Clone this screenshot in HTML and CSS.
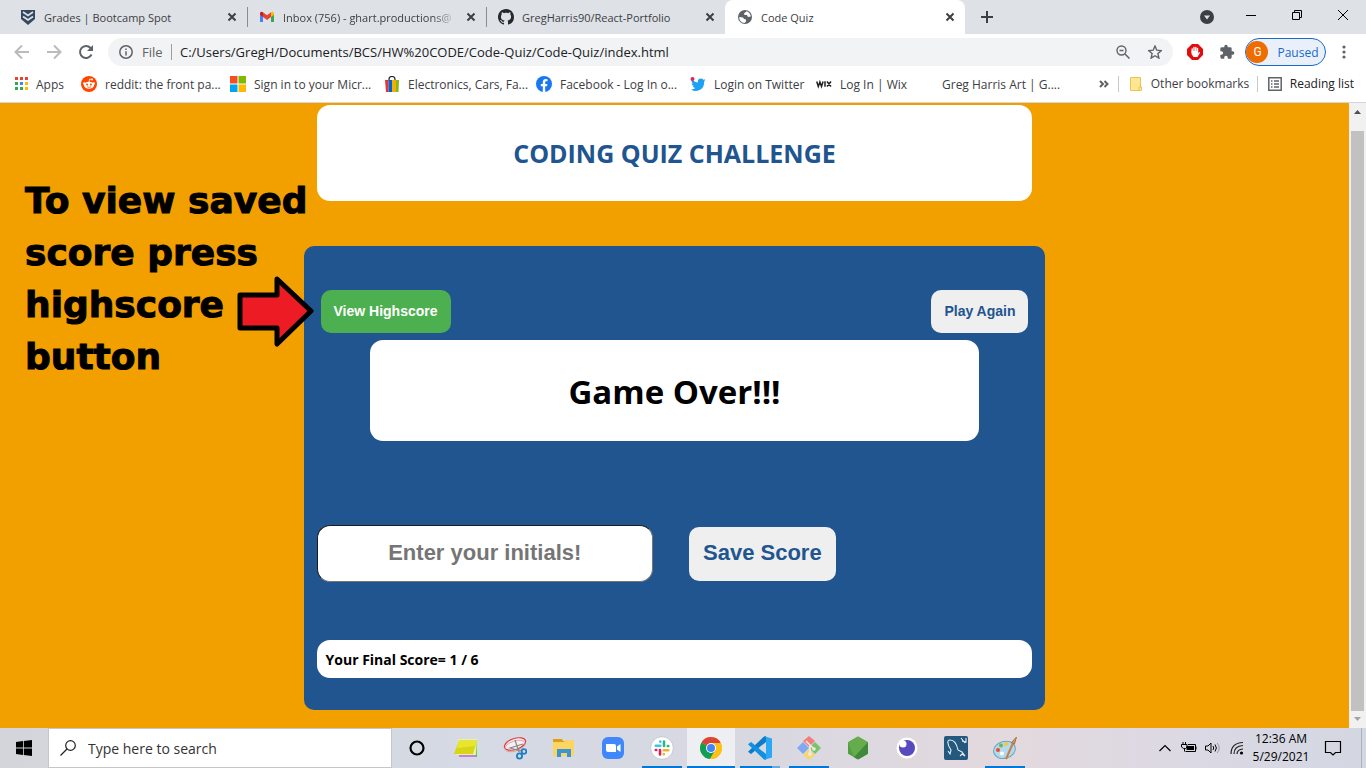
FILE: index.html
```html
<!DOCTYPE html>
<html lang="en">
<head>
<meta charset="utf-8">
<title>Code Quiz</title>
<link rel="stylesheet" href="styles.css">
</head>
<body>
<div class="desktop">
  <header class="browser">
    <div class="tabstrip">
      <div class="tab">
        <svg class="i16" viewBox="0 0 16 16"><path d="M1 1h14v9l-7 6-7-6z" fill="#34495e"/><path d="M3 3l5 3.500 5-3.500M3 7.500l5 3.500 5-3.500" fill="none" stroke="#dee1e6" stroke-width="1.800"/></svg>
        <span class="tab-title">Grades | Bootcamp Spot</span>
        <button class="tab-close" aria-label="Close tab"><svg class="i10" viewBox="0 0 10 10"><path d="M1.500 1.500l7 7M8.500 1.500l-7 7"/></svg></button>
      </div>
      <div class="tab split">
        <svg class="i16" viewBox="0 0 16 16"><path d="M1 4v9h3V6.500z" fill="#4285f4"/><path d="M15 4v9h-3V6.500z" fill="#34a853"/><path d="M1 4.500C1 2.500 3 2.500 4 3.300V8L1 5.800z" fill="#c5221f"/><path d="M15 4.500c0-2-2-2-3-1.200V8l3-2.200z" fill="#fbbc04"/><path d="M4 3.300l4 3 4-3V8l-4 3-4-3z" fill="#ea4335"/></svg>
        <span class="tab-title fade">Inbox (756) - ghart.productions@</span>
        <button class="tab-close" aria-label="Close tab"><svg class="i10" viewBox="0 0 10 10"><path d="M1.500 1.500l7 7M8.500 1.500l-7 7"/></svg></button>
      </div>
      <div class="tab split">
        <svg class="i16" viewBox="0 0 16 16"><path fill="#24292e" d="M8 0C3.580 0 0 3.580 0 8c0 3.540 2.290 6.530 5.470 7.590.4.070.55-.17.55-.38 0-.19-.01-.82-.01-1.490-2.010.37-2.530-.49-2.690-.94-.09-.23-.48-.94-.82-1.130-.28-.15-.68-.52-.01-.53.63-.01 1.080.58 1.230.82.72 1.210 1.870.87 2.330.66.07-.52.28-.87.51-1.070-1.780-.2-3.640-.89-3.640-3.950 0-.87.31-1.590.82-2.150-.08-.2-.36-1.020.08-2.120 0 0 .67-.21 2.200.82.64-.18 1.320-.27 2-.27s1.360.09 2 .27c1.530-1.040 2.200-.82 2.200-.82.44 1.100.16 1.920.08 2.120.51.56.82 1.270.82 2.150 0 3.070-1.870 3.750-3.650 3.950.29.25.54.73.54 1.480 0 1.070-.01 1.930-.01 2.200 0 .21.15.46.55.38A8.010 8.010 0 0 0 16 8c0-4.420-3.580-8-8-8z"/></svg>
        <span class="tab-title">GregHarris90/React-Portfolio</span>
        <button class="tab-close" aria-label="Close tab"><svg class="i10" viewBox="0 0 10 10"><path d="M1.500 1.500l7 7M8.500 1.500l-7 7"/></svg></button>
      </div>
      <div class="tab active">
        <svg class="i16" viewBox="0 0 16 16"><circle cx="8" cy="8" r="7" fill="#5f6368"/><path d="M9.500 2.200C12 2.800 13.500 5 13.800 7.500L11 8 10 6H7.500L7 4.500z" fill="#fff"/><path d="M2.200 8L6 8.500l1 1.500 2 .5v2L7.500 14C4.500 13.800 2.200 11.500 2.200 8z" fill="#fff"/></svg>
        <span class="tab-title">Code Quiz</span>
        <button class="tab-close" aria-label="Close tab"><svg class="i10" viewBox="0 0 10 10"><path d="M1.500 1.500l7 7M8.500 1.500l-7 7"/></svg></button>
      </div>
      <button class="new-tab" aria-label="New tab"><svg class="i12" viewBox="0 0 12 12"><path d="M6 0v12M0 6h12"/></svg></button>
      <button class="tab-search" aria-label="Search tabs"><svg class="i14" viewBox="0 0 14 14"><circle cx="7" cy="7" r="7" fill="#3c4043"/><path d="M4 5.500h6L7 9.500z" fill="#dee1e6"/></svg></button>
      <div class="window-controls">
        <button aria-label="Minimize"><svg class="i10" viewBox="0 0 10 10"><path d="M0 5.500h10"/></svg></button>
        <button aria-label="Restore"><svg class="i10" viewBox="0 0 10 10"><path d="M.5 2.500h7v7h-7zM2.500 2.500v-2h7v7h-2"/></svg></button>
        <button aria-label="Close"><svg class="i10" viewBox="0 0 10 10"><path d="M0 0l10 10M10 0L0 10"/></svg></button>
      </div>
    </div>

    <div class="toolbar">
      <nav class="nav-buttons">
        <button aria-label="Back"><svg class="i16 dim" viewBox="0 0 16 16"><path d="M15 8H2M8 1.500L1.500 8 8 14.500"/></svg></button>
        <button aria-label="Forward"><svg class="i16 dim" viewBox="0 0 16 16"><path d="M1 8h13M8 1.500L14.500 8 8 14.500"/></svg></button>
        <button aria-label="Reload"><svg class="i16 dark" viewBox="0 0 16 16"><path d="M13.500 10.500A6 6 0 1 1 12.500 4L14 5.500"/><path d="M15 1v6H9z" fill="#5f6368" stroke="none"/></svg></button>
      </nav>
      <div class="omnibox">
        <svg class="i14" viewBox="0 0 14 14"><circle cx="7" cy="7" r="6.200" fill="none" stroke="#5f6368" stroke-width="1.500"/><path d="M7 6.200v4.200M7 3.400v1.500" stroke="#5f6368" stroke-width="1.500"/></svg>
        <span class="scheme">File</span>
        <input class="url" type="text" aria-label="Address" value="C:/Users/GregH/Documents/BCS/HW%20CODE/Code-Quiz/Code-Quiz/index.html">
        <button aria-label="Zoom"><svg class="i14" viewBox="0 0 14 14"><circle cx="5.500" cy="5.500" r="4.500" fill="none" stroke="#5f6368" stroke-width="1.400"/><path d="M9 9l4.500 4.500M3.500 5.500h4" stroke="#5f6368" stroke-width="1.500"/></svg></button>
        <button aria-label="Bookmark this page"><svg class="i14" viewBox="0 0 14 14"><path d="M7 1l1.800 4.200 4.500.4-3.400 3 1 4.500L7 10.700l-3.900 2.400 1-4.500-3.400-3 4.500-.4z" fill="none" stroke="#5f6368" stroke-width="1.400"/></svg></button>
      </div>
      <div class="extensions">
        <button aria-label="Ad blocker"><svg class="i16" viewBox="0 0 16 16"><path d="M5 0h6l5 5v6l-5 5H5l-5-5V5z" fill="#e40d0d"/><path d="M5.200 8V5M7 7V3.500M8.800 7V3.500M10.500 7V4.500" stroke="#fff" stroke-width="1.400" stroke-linecap="round"/><path d="M4.500 7h6.700v2l1.300-1c.6 0 .6.500.3 1L10.500 13H6.500l-2-3z" fill="#fff"/></svg></button>
        <button aria-label="Extensions"><svg class="i16" viewBox="0 0 24 24"><path fill="#5f6368" d="M20.500 11H19V7a2 2 0 0 0-2-2h-4V3.500a2.500 2.500 0 0 0-5 0V5H4a2 2 0 0 0-2 2v3.800h1.500a2.700 2.700 0 0 1 0 5.400H2V20a2 2 0 0 0 2 2h3.800v-1.500a2.700 2.700 0 0 1 5.400 0V22H17a2 2 0 0 0 2-2v-4h1.500a2.500 2.500 0 0 0 0-5z"/></svg></button>
      </div>
      <button class="profile"><span class="avatar">G</span>Paused</button>
      <button class="menu" aria-label="Menu"><svg class="i14" viewBox="0 0 14 14" fill="#5f6368"><circle cx="7" cy="2" r="1.600"/><circle cx="7" cy="7" r="1.600"/><circle cx="7" cy="12" r="1.600"/></svg></button>
    </div>

    <nav class="bookmarks">
      <div class="bookmark-list">
        <a href="#"><svg class="i14" viewBox="0 0 14 14"><path fill="#ea4335" d="M1 0h3v3H1zM6 0h3v3H6zM11 0h3v3h-3z"/><path fill="#34a853" d="M1 5h3v3H1zM1 10h3v3H1zM6 10h3v3H6z"/><path fill="#4285f4" d="M6 5h3v3H6z"/><path fill="#fbbc04" d="M11 5h3v3h-3zM11 10h3v3h-3z"/></svg>Apps</a>
        <a href="#"><svg class="i16" viewBox="0 0 16 16"><circle cx="8" cy="8" r="8" fill="#ff4500"/><ellipse cx="8" cy="9.200" rx="5" ry="3.500" fill="#fff"/><circle cx="3.300" cy="7.500" r="1.300" fill="#fff"/><circle cx="12.700" cy="7.500" r="1.300" fill="#fff"/><circle cx="11" cy="3.500" r="1" fill="#fff"/><path d="M8 6l.7-3 2.300.5" fill="none" stroke="#fff" stroke-width=".8"/><circle cx="6.100" cy="8.500" r="1" fill="#ff4500"/><circle cx="9.900" cy="8.500" r="1" fill="#ff4500"/><path d="M6 10.800q2 1.200 4 0" fill="none" stroke="#ff4500" stroke-width=".7"/></svg>reddit: the front pa...</a>
        <a href="#"><svg class="i16" viewBox="0 0 16 16"><path fill="#f25022" d="M0 0h7.500v7.500H0z"/><path fill="#7fba00" d="M8.500 0H16v7.500H8.500z"/><path fill="#00a4ef" d="M0 8.500h7.500V16H0z"/><path fill="#ffb900" d="M8.500 8.500H16V16H8.500z"/></svg>Sign in to your Micr...</a>
        <a href="#"><svg class="i16" viewBox="0 0 16 16"><path d="M5 5V3q0-2.500 3-2.500T11 3v2" fill="none" stroke="#222" stroke-width="1.200"/><path fill="#e53238" d="M1 4h3.500v12H2z"/><path fill="#0064d2" d="M4.500 4H8v12H4.500z"/><path fill="#f5af02" d="M8 4h4v12H8z"/><path fill="#86b817" d="M12 4h3l-.5 12H12z"/></svg>Electronics, Cars, Fa...</a>
        <a href="#"><svg class="i16" viewBox="0 0 16 16"><circle cx="8" cy="8" r="8" fill="#1877f2"/><path fill="#fff" d="M6.800 16v-5.700h-2V8h2V6.200c0-2 1.200-3.100 3-3.100l1.700.1v2h-1c-1 0-1.300.6-1.300 1.200V8h2.200l-.4 2.300H9.200V16z"/></svg>Facebook - Log In o...</a>
        <a href="#"><svg class="i16" viewBox="0 0 16 16"><path fill="#1da1f2" d="M15.500 4.200c-.5.300-1 .4-1.600.5.500-.4 1-.9 1.200-1.600-.6.300-1.200.6-1.800.7A3 3 0 0 0 8 6.500 8 8 0 0 1 2.200 3.500 3 3 0 0 0 3 7.600c-.5 0-.9-.2-1.300-.4A3 3 0 0 0 4 10.100c-.4.100-.9.100-1.300 0a3 3 0 0 0 2.700 2A6 6 0 0 1 1 13.500 8.300 8.300 0 0 0 14 6z"/><circle cx="2.500" cy="3" r="2" fill="#e0245e"/></svg>Login on Twitter</a>
        <a href="#"><svg class="i16" viewBox="0 0 16 16"><path d="M.7 5.500l1.600 5 1.600-4.500 1.600 4.500 1.600-5M9 5.300v5.400M11 5.500l4 5M15 5.500l-4 5" fill="none" stroke="#222" stroke-width="1.500"/></svg>Log In | Wix</a>
        <a href="#"><svg class="i16" viewBox="0 0 16 16"></svg>Greg Harris Art | G....</a>
      </div>
      <button class="overflow" aria-label="More bookmarks"><svg class="i10" viewBox="0 0 10 10"><path d="M1 2l3 3-3 3M5.500 2l3 3-3 3"/></svg></button>
      <a class="other" href="#"><svg class="i14" viewBox="0 0 14 14"><path d="M1.500.5h10v13h-10z" fill="#ffe694" stroke="#e8c451"/><path d="M10 10h2.500v3.500H10z" fill="#ffe694" stroke="#e8c451"/></svg>Other bookmarks</a>
      <a class="reading" href="#"><svg class="i14" viewBox="0 0 14 14"><path d="M.8.800h12.400v12.400H.8z" fill="none" stroke="#5f6368" stroke-width="1.500"/><path d="M3 4h1.500M3 7h1.500M3 10h1.500M6 4h5M6 7h5M6 10h5" stroke="#5f6368" stroke-width="1.500"/></svg>Reading list</a>
    </nav>
  </header>

  <div class="viewport">
    <main class="page">
      <h1 class="title">CODING QUIZ CHALLENGE</h1>
      <section class="panel">
        <div class="actions">
          <button class="btn primary">View Highscore</button>
          <button class="btn">Play Again</button>
        </div>
        <h2 class="result">Game Over!!!</h2>
        <form class="save">
          <input class="initials" type="text" placeholder="Enter your initials!" aria-label="Enter your initials">
          <button class="save-btn" type="button">Save Score</button>
        </form>
        <p class="score">Your Final Score= 1 / 6</p>
      </section>
      <p class="note">To view saved<br>score press<br>highscore<br>button</p>
      <svg class="arrow" viewBox="0 0 78 74"><path d="M3 21h37V5l34 32-34 33V54H3z" fill="#ed1c24" stroke="#000" stroke-width="5" stroke-linejoin="round"/></svg>
    </main>
    <div class="scrollbar">
      <svg class="sb-arrow" viewBox="0 0 17 17"><path d="M5 11h7L8.500 7z" fill="#505050"/></svg>
      <div class="thumb"></div>
      <svg class="sb-arrow" viewBox="0 0 17 17"><path d="M5 6h7l-3.500 4z" fill="#a3a3a3"/></svg>
    </div>
  </div>

  <footer class="taskbar">
    <button class="start" aria-label="Start"><svg class="i16" viewBox="0 0 16 16"><path d="M0 2l7-1v6.500H0zM7.800.9L16 0v7.500H7.800zM0 8.400h7V15l-7-1zM7.800 8.400H16V16l-8.200-1z"/></svg></button>
    <label class="search"><svg class="i16" viewBox="0 0 16 16"><circle cx="10.500" cy="5.500" r="4.800" fill="none" stroke="#222" stroke-width="1.200"/><path d="M7 9L.5 15.500" stroke="#222" stroke-width="1.200"/></svg><input type="text" placeholder="Type here to search" aria-label="Search"></label>
    <nav class="apps">
      <button aria-label="Cortana"><svg viewBox="0 0 24 24"><circle cx="12" cy="12" r="6.500" fill="none" stroke="#000" stroke-width="2.200"/></svg></button>
      <button aria-label="Sticky Notes"><svg viewBox="0 0 24 24"><path d="M5 4h18v17H5z" fill="#46d32c"/><path d="M5 18h17v3H5z" fill="#c77de0"/><path d="M4 3h19l-1 16H2z" fill="#e9f2a4"/><path d="M5 4.500h18L19 18H0z" fill="#d6d616"/><path d="M5 4.500h18L21 10 3 12z" fill="#e7e52e"/></svg></button>
      <button aria-label="Snipping Tool"><svg viewBox="0 0 24 24"><g fill="none"><ellipse cx="12" cy="8" rx="11" ry="5.500" transform="rotate(-18 12 8)" fill="#f4f0f2" stroke="#e0393b" stroke-width="1.200"/><ellipse cx="12" cy="10" rx="10.500" ry="5" transform="rotate(-18 12 10)" stroke="#d99" stroke-width=".8"/><path d="M12 4l4 12M20 8L7 12l11 3" stroke="#888" stroke-width="1.200"/><circle cx="21" cy="15.500" r="2.300" stroke="#1b7fc4" stroke-width="1.800"/><circle cx="16.500" cy="20" r="2.600" stroke="#1b7fc4" stroke-width="1.800"/></g></svg></button>
      <button aria-label="File Explorer"><svg viewBox="0 0 24 24"><path d="M1 3h9l1 2h11v3H1z" fill="#d9a013"/><path d="M1 6h11l1-2h9v16H1z" fill="#fcd462"/><path d="M5 13h14v8h-4v-4H9v4H5z" fill="#3b94d6"/></svg></button>
      <button aria-label="Zoom"><svg viewBox="0 0 24 24"><rect x="1" y="1" width="22" height="22" rx="6" fill="#4087fc"/><path d="M5 8h8q2 0 2 2v6H7q-2 0-2-2zM16 10.500L19.500 8v8L16 13.500z" fill="#fff"/></svg></button>
      <button class="running" aria-label="Slack"><svg viewBox="0 0 24 24"><circle cx="12" cy="12" r="11.300" fill="#fff" stroke="#bbb" stroke-width=".7"/><g stroke-width="2.600" stroke-linecap="round"><path d="M10.300 9.800H5.800M10.300 5.500v.3" stroke="#36c5f0"/><path d="M14 10V5.500M18.300 10h-.5" stroke="#2eb67d"/><path d="M13.800 14.200h4.500M13.800 18.300v-.3" stroke="#ecb22e"/><path d="M10 14v4.500M5.800 14h.5" stroke="#e01e5a"/></g></svg></button>
      <button class="running current" aria-label="Chrome"><svg viewBox="0 0 24 24"><circle cx="12" cy="12" r="11" fill="#fbc116"/><path d="M12 12L2.500 6.500A11 11 0 0 1 21.700 7H12z" fill="#db4437"/><path d="M2.500 6.500A11 11 0 0 0 11 23l5-8.500L12 12z" fill="#0f9d58"/><path d="M12 7h9.700A11 11 0 0 1 11 23l5.500-9z" fill="#fbc116"/><circle cx="12" cy="12" r="5" fill="#fff"/><circle cx="12" cy="12" r="4" fill="#4285f4"/></svg></button>
      <button class="running stacked" aria-label="Visual Studio Code"><svg viewBox="0 0 24 24"><path d="M18 0v6L3 18l-3-2.200L16 .5z" fill="#0b7dc9"/><path d="M18 24v-6L3 6 0 8.200 16 23.500z" fill="#1290df"/><path d="M16.500.200L24 2.500v19l-7.500 2.300L18 22V2z" fill="#28a8f5"/></svg></button>
      <button class="running" aria-label="Git"><svg viewBox="0 0 24 24"><path d="M12 0l6 5-6 6-6-6z" fill="#f37d7b"/><path d="M18 6l6 6-6 6-6-6z" fill="#7ac36a"/><path d="M6 6l6 6-6 6-6-6z" fill="#80a9f4"/><path d="M12 13l6 6-6 5-6-5z" fill="#f7d767"/><path d="M9 5l4 4v9M13 9l4 4" fill="none" stroke="#ece9e6" stroke-width="1.700"/><circle cx="13" cy="18" r="2" fill="#ece9e6"/><circle cx="17" cy="13" r="1.800" fill="#ece9e6"/></svg></button>
      <button aria-label="Node.js"><svg viewBox="0 0 24 24"><path d="M12 .500l10 5.700v11.600l-10 5.700-10-5.700V6.200z" fill="#529e43"/><path d="M2 6.200l10-5.700 10 5.700L8 21.200z" fill="#65ad4c"/><path d="M22 6.200v11.600l-10 5.700-4-2.300z" fill="#3f8a3a"/></svg></button>
      <button aria-label="Insomnia"><svg viewBox="0 0 24 24"><circle cx="12" cy="12" r="10.500" fill="#fff"/><circle cx="12" cy="12" r="8" fill="#5849be"/><circle cx="8" cy="8" r="3.500" fill="#fff"/></svg></button>
      <button aria-label="MySQL Workbench"><svg viewBox="0 0 24 24"><rect x="0" y="0" width="24" height="24" rx="2" fill="#24587e"/><path d="M4 15l2 3 1-4C3 8 3 4 6 4c5 0 7 5 8 10l4 2 3 4-3-2-2 2M17 2l4 5M22 2v4l-4-1" fill="none" stroke="#e5eef4" stroke-width="1.100"/></svg></button>
      <button class="running" aria-label="Paint"><svg viewBox="0 0 24 24"><ellipse cx="11.500" cy="14" rx="11" ry="8.500" fill="#b4d9ed" stroke="#6ba4c2" transform="rotate(-15 11 14)"/><circle cx="5" cy="14" r="2" fill="#e44b35"/><circle cx="8" cy="9.500" r="2" fill="#67b84d"/><circle cx="13" cy="8" r="2" fill="#f0c83c"/><circle cx="9" cy="17.500" r="2" fill="#fff"/><path d="M20 7l-7 16" stroke="#c58142" stroke-width="2"/><path d="M23.500 1l-2 7-3-1.500z" fill="#c89768" stroke="#a8744a"/></svg></button>
    </nav>
    <div class="tray">
      <button aria-label="Show hidden icons"><svg class="i12" viewBox="0 0 12 12"><path d="M.5 9L6 3.500 11.500 9" fill="none" stroke="#000" stroke-width="1.200"/></svg></button>
      <button aria-label="Battery"><svg class="i16" viewBox="0 0 16 16"><path d="M7 4.500h7.500v7h-10M15 6.500v3M2 2v2M4.500 2v2M.5 4.500H6V7L4.500 8.500h-2L.5 7zM3.500 8.500v3" fill="none" stroke="#000"/><path d="M5.500 6H13v4H5.500z"/></svg></button>
      <button aria-label="Volume"><svg class="i16" viewBox="0 0 16 16"><g fill="none" stroke="#000"><path d="M.5 6H3l3-3v10l-3-3H.5zM8 6q1.500 2 0 4M10 4.500q2.800 3.500 0 7"/><path d="M12.200 3q4 5 0 10" stroke="#999"/></g></svg></button>
      <button aria-label="Network"><svg class="i14" viewBox="0 0 14 14"><g fill="none" stroke="#222" stroke-width="1.200"><path d="M1 13Q1 2 13 1.500M4 13q0-8 9-8.500M7 13q0-4.500 6-5"/></g><circle cx="11.500" cy="12" r="1.600"/></svg></button>
      <time class="clock">12:36 AM<br>5/29/2021</time>
      <button class="notify" aria-label="Notifications"><svg class="i18" viewBox="0 0 18 18"><path d="M1.500 2.500h15v11h-5L9 16l-2.500-2.500h-5z" fill="none" stroke="#000" stroke-width="1.200"/></svg></button>
    </div>
  </footer>
</div>
</body>
</html>
```

FILE: styles.css
```css
* { box-sizing: border-box; }

body {
  margin: 0;
  font-family: "Open Sans", "Noto Sans", sans-serif;
  font-size: 12px;
  color: #3c4043;
}

button {
  display: flex;
  align-items: center;
  justify-content: center;
  padding: 0;
  border: 0;
  background: none;
  font: inherit;
  color: inherit;
}

input { border: 0; font: inherit; }
a { color: inherit; text-decoration: none; }
svg { display: block; flex: none; }

.i10 { width: 10px; height: 10px; }
.i12 { width: 12px; height: 12px; }
.i14 { width: 14px; height: 14px; }
.i16 { width: 16px; height: 16px; }
.i18 { width: 18px; height: 18px; }

.desktop {
  display: flex;
  flex-direction: column;
  height: 100vh;
  overflow: hidden;
}

/* Tab strip */
.tabstrip {
  display: flex;
  height: 34px;
  padding-left: 8px;
  background: #dee1e6;
  font-size: 11px;
}

.tab {
  display: flex;
  align-items: center;
  gap: 8px;
  flex: 0 1 239px;
  min-width: 0;
  padding: 0 10px 0 12px;
}

.tab.split {
  background: linear-gradient(#8a8d91, #8a8d91) left center / 1px 20px no-repeat;
}

.tab.active {
  flex-basis: 240px;
  border-radius: 8px 8px 0 0;
  background: #fff;
}

.tab-title {
  flex: 1;
  min-width: 0;
  overflow: hidden;
  white-space: nowrap;
}

.tab-title.fade {
  -webkit-mask-image: linear-gradient(90deg, #000 85%, transparent);
  mask-image: linear-gradient(90deg, #000 85%, transparent);
}

.tab-close svg, .new-tab svg { fill: none; stroke: #3c4043; stroke-width: 2; }
.new-tab { width: 44px; }
.tab-search { width: 42px; margin-left: auto; }
.window-controls { display: flex; height: 29px; }
.window-controls button { width: 46px; }
.window-controls svg { fill: none; stroke: #000; }

/* Toolbar */
.toolbar {
  display: flex;
  align-items: center;
  height: 36px;
  padding: 0 4px 0 6px;
  background: #fff;
}

.nav-buttons { display: flex; margin-right: 6px; }
.nav-buttons button { width: 32px; height: 28px; }
.dim { fill: none; stroke: #b9bbbd; stroke-width: 2; }
.dark { fill: none; stroke: #5f6368; stroke-width: 2; }

.omnibox {
  display: flex;
  align-items: center;
  flex: 1;
  height: 28px;
  padding: 0 2px 0 11px;
  border-radius: 14px;
  background: #f1f3f4;
  font-size: 13px;
}

.scheme {
  width: 39px;
  padding-left: 9px;
  border-right: 1px solid #9aa0a6;
  line-height: 16px;
  color: #5f6368;
}

.url {
  flex: 1;
  min-width: 0;
  padding: 0 8px;
  background: none;
  color: #202124;
}

.omnibox button { width: 32px; }
.extensions { display: flex; margin: 0 2px 0 6px; }
.extensions button { width: 32px; }

.profile {
  gap: 9px;
  width: 81px;
  height: 28px;
  padding-right: 6px;
  border: 1px solid #1967d2;
  border-radius: 14px;
  background: #eaf0fa;
  color: #1967d2;
}

.avatar {
  width: 22px;
  height: 22px;
  border-radius: 50%;
  background: #ef6c00;
  color: #fff;
  font-family: Roboto, sans-serif;
  line-height: 22px;
}

.menu { width: 36px; }

/* Bookmarks */
.bookmarks {
  display: flex;
  align-items: center;
  height: 33px;
  padding: 0 12px 4px 14px;
  border-bottom: 1px solid #d5d7da;
  background: #fff;
  white-space: nowrap;
}

.bookmarks a { display: flex; align-items: center; gap: 8px; }
.bookmark-list {
  display: grid;
  grid-template-columns: 67px 149px 154px 152px 154px 126px 102px auto;
  flex: 1;
  min-width: 0;
}

.overflow { width: 28px; }
.overflow svg { fill: none; stroke: #5f6368; stroke-width: 2; }
.other, .reading { padding-left: 10px; border-left: 1px solid #c8cacd; line-height: 16px; }
.other { width: 139px; }
.reading { color: #202124; }

/* Quiz page */
.viewport { display: flex; flex: 1; min-height: 0; }

.page {
  position: relative;
  flex: 1;
  padding-top: 2px;
  background: #f29f00;
}

.title {
  width: 53%;
  margin: 0 auto 45px;
  padding: 30px 0;
  border-radius: 13px;
  background: #fff;
  color: #205590;
  font-size: 25px;
  font-weight: 700;
  line-height: 36px;
  text-align: center;
}

.panel {
  width: 55%;
  margin: 0 auto;
  padding: 44px 13px 32px;
  border-radius: 10px;
  background: #205590;
}

.actions { display: flex; justify-content: space-between; padding: 0 4px; }

.btn, .save-btn {
  padding: 14px 13px;
  border-radius: 10px;
  background: #efefef;
  color: #205590;
  font: bold 14px/15px "Liberation Sans", Arial, sans-serif;
}

.btn.primary { background: #4caf50; color: #fff; }

.result {
  width: 85%;
  margin: 7px auto 84px;
  padding: 28px 0 25px;
  border-radius: 13px;
  background: #fff;
  color: #000;
  font-size: 33px;
  font-weight: 700;
  line-height: 48px;
  text-align: center;
}

.save { display: flex; align-items: center; gap: 36px; margin-bottom: 58px; }

.initials {
  width: 47%;
  height: 57px;
  padding: 0 8px 2px;
  border: 1px solid;
  border-color: #1c1c1c #767676 #767676 #1c1c1c;
  border-radius: 13px;
  background: #fff;
  font: bold 22px/26px "Liberation Sans", Arial, sans-serif;
  text-align: center;
}

.initials::placeholder { color: #757575; }
.save-btn { padding: 13px 14px 15px; font-size: 22px; line-height: 26px; }

.score {
  margin: 0;
  padding: 10px 9px 8px;
  border-radius: 13px;
  background: #fff;
  color: #000;
  font-size: 14px;
  font-weight: 700;
  line-height: 20px;
}

/* Callout drawn over the page */
.note {
  position: absolute;
  top: 72px;
  left: 25px;
  margin: 0;
  color: #000;
  font: bold 36px/52px "DejaVu Sans", sans-serif;
  -webkit-text-stroke: 1px #000;
}

.arrow { position: absolute; top: 171px; left: 237px; width: 78px; height: 74px; }

.scrollbar { display: flex; flex-direction: column; width: 17px; background: #f1f1f1; }
.sb-arrow { width: 17px; height: 17px; }
.thumb { flex: 1; margin: 11px 2px 0; background: #c1c1c1; }

/* Taskbar */
.taskbar {
  display: flex;
  height: 40px;
  background: linear-gradient(90deg, #d3d5da, #d5dae4 35%, #d8d8e1 55%, #e3d9de 74%, #dcd9e3 86%, #d3d7e2);
  color: #000;
}

.start { width: 48px; }

.search {
  display: flex;
  align-items: center;
  gap: 12px;
  width: 344px;
  padding-left: 11px;
  border: 1px solid #c6c6c8;
  background: #fff;
  font-size: 14px;
}

.search input { flex: 1; min-width: 0; padding: 0; }
.search input::placeholder { color: #333; }

.apps { display: flex; gap: 1px; padding-left: 1px; }
.apps button { width: 48px; border: solid transparent; border-width: 2px 0; }
.apps svg { width: 24px; height: 24px; }
.apps .running {
  background: linear-gradient(#0078d7, #0078d7) center bottom / 40px 2px no-repeat border-box;
}
.apps .current {
  background: linear-gradient(#0078d7, #0078d7) center bottom / 48px 2px no-repeat border-box, #eeeff3;
}
.apps .stacked {
  background: linear-gradient(90deg, #0078d7 80%, #64aae5 80%) center bottom / 40px 2px no-repeat border-box;
}

.tray { display: flex; align-items: center; margin-left: auto; margin-right: 4px; border-right: 1px solid #aeb2bd; }
.tray button { width: 24px; height: 40px; }
.clock { width: 64px; line-height: 18px; text-align: center; }
.tray .notify { width: 40px; margin-right: 8px; }
```
